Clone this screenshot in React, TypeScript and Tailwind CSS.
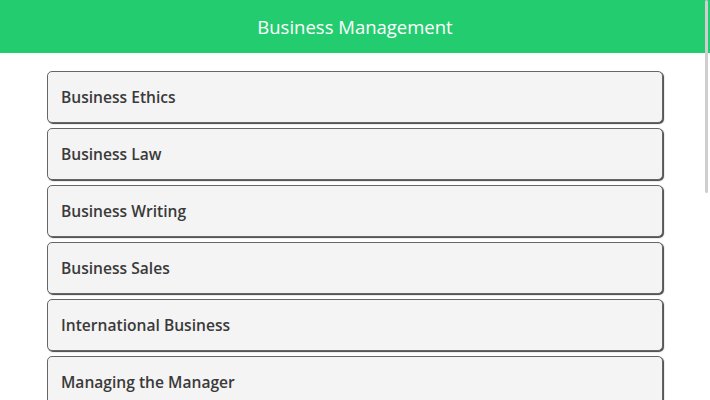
const courses = [
  'Business Ethics',
  'Business Law',
  'Business Writing',
  'Business Sales',
  'International Business',
  'Managing the Manager',
  'Marketing Basics',
]

export default function App() {
  return (
    <div className="relative h-[400px] overflow-hidden bg-white font-['Open_Sans',sans-serif]">
      <header className="flex h-[53px] items-center justify-center bg-[#24cc70] pt-[1px]">
        <h1 className="text-[18.5px] text-white">Business Management</h1>
      </header>
      <ul className="flex flex-col gap-[5px] px-[47px] pt-[18px]">
        {courses.map((c) => (
          <li
            key={c}
            className="flex h-[52px] items-center rounded-[5px] border border-[#666] bg-[#f4f4f4] pl-[13px] pt-[2px] text-[15.6px] font-semibold text-[#3a3a3a] shadow-[1px_1px_1px_#444]"
          >
            {c}
          </li>
        ))}
      </ul>
      <div className="absolute right-[2px] top-0 h-[193px] w-[3px] rounded-full bg-[#cfcfcf]" />
    </div>
  )
}
